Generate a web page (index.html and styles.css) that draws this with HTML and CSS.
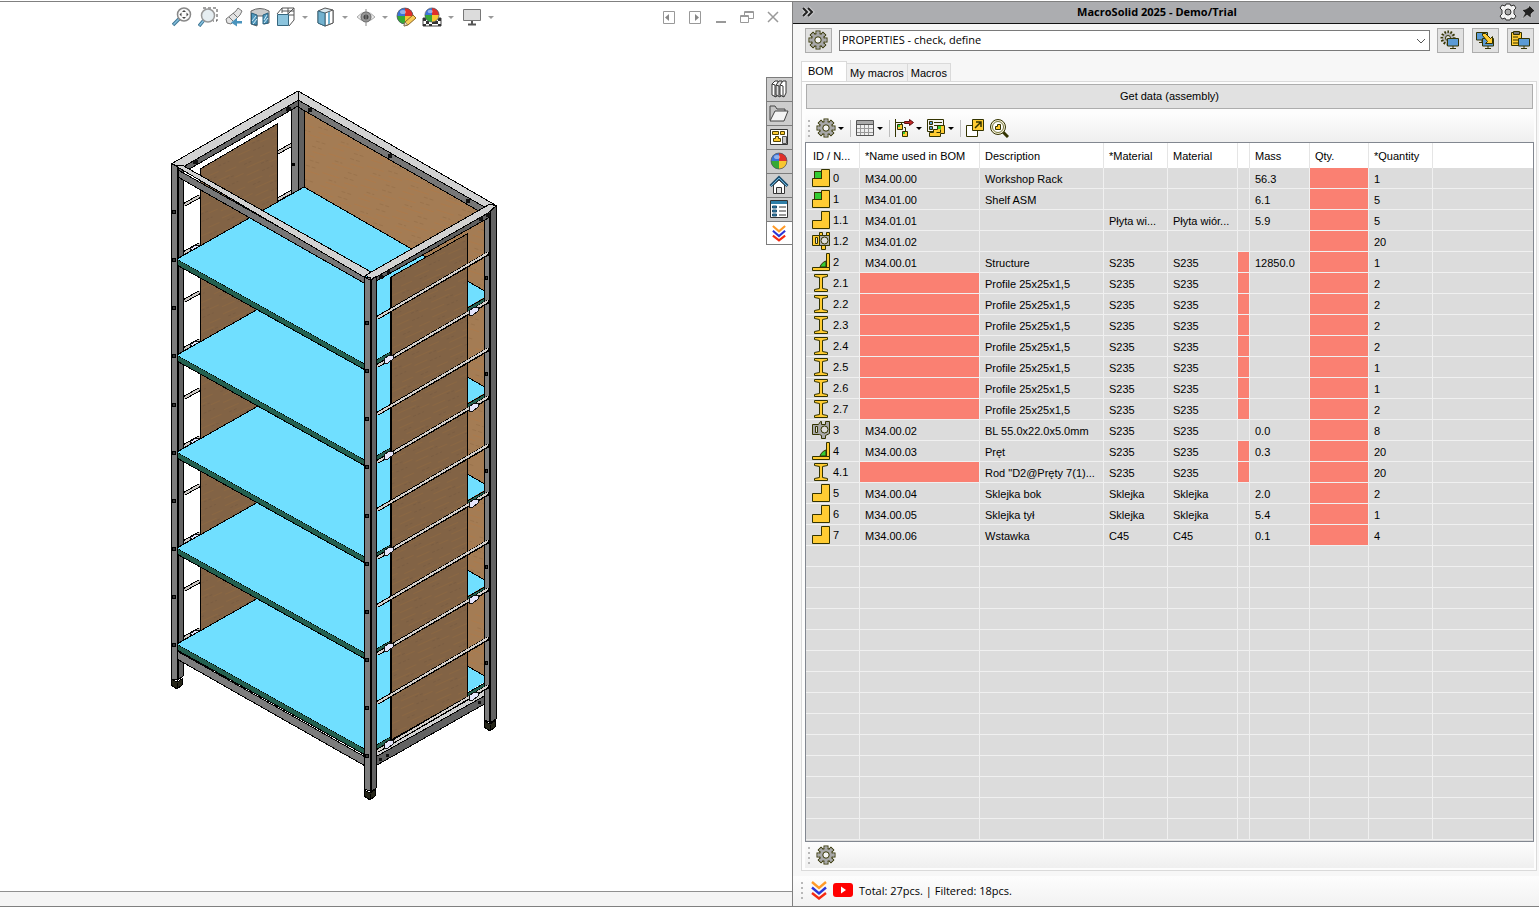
FILE: index.html
```html
<!DOCTYPE html>
<html lang="en">
    <head>
        <meta charset="UTF-8" />
        <meta name="viewport" content="width=device-width" />
        <title>MacroSolid 2025 - Demo/Trial</title>
        <link rel="stylesheet" href="styles.css">
    </head>
    <body>
        <!-- shared icons -->
        <svg class="defs" width="0" height="0">
            <symbol id="gear" viewBox="0 0 20 20">
                <g fill="#a8a8a8" stroke="#333300">
                    <rect x="8" y="1" width="4" height="18" /><rect x="1" y="8" width="18" height="4" />
                    <rect x="8" y="1" width="4" height="18" transform="rotate(45 10 10)" />
                    <rect x="8" y="1" width="4" height="18" transform="rotate(-45 10 10)" />
                    <circle cx="10" cy="10" r="6.5" />
                </g>
                <g fill="#a8a8a8">
                    <rect x="8.5" y="1.5" width="3" height="17" /><rect x="1.5" y="8.5" width="17" height="3" />
                    <rect x="8.5" y="1.5" width="3" height="17" transform="rotate(45 10 10)" />
                    <rect x="8.5" y="1.5" width="3" height="17" transform="rotate(-45 10 10)" />
                </g>
                <circle cx="10" cy="10" r="3.2" fill="#f4f4f4" stroke="#333300" />
            </symbol>
            <symbol id="screen" viewBox="0 0 12 12">
                <path d="M.5 .5h11v7.500h-11z" fill="#5b9bd5" stroke="#333300" />
                <path d="M6 8v2.500M3 10.500h6" stroke="#333300" fill="none" />
            </symbol>
            <symbol id="ball" viewBox="0 0 18 18">
                <circle cx="9" cy="9" r="8" fill="#3a73d8" />
                <path d="M9 9V1A8 8 0 0 1 17 9z" fill="#e0302a" />
                <path d="M9 9H17A8 8 0 0 1 9 17z" fill="#f7c62f" />
                <path d="M9 9V17A8 8 0 0 1 1 9z" fill="#36a936" />
                <circle cx="9" cy="9" r="8" fill="none" stroke="#555" stroke-opacity=".7" />
                <ellipse cx="7" cy="5" rx="3" ry="2" fill="#fff" opacity=".45" />
            </symbol>
            <symbol id="logo" viewBox="0 0 16 20">
                <g fill="none" stroke-width="2.400">
                    <path d="M1 2l7 6 7-6" stroke="#ff9a28" />
                    <path d="M1 7.500l7 6 7-6" stroke="#2a35d8" />
                    <path d="M1 13l7 5.500 7-5.500" stroke="#f52a12" />
                </g>
            </symbol>
            <symbol id="asm" viewBox="0 0 18 18">
                <path d="M.5 9.500h9v-9h8v17h-17z" fill="#ffcc33" stroke="#333300" />
                <rect x="2.500" y="2.500" width="7" height="7" fill="#33cc33" stroke="#333300" />
            </symbol>
            <symbol id="part" viewBox="0 0 18 18">
                <path d="M.5 9.500h9v-9h8v17h-17z" fill="#ffcc33" stroke="#333300" />
            </symbol>
            <symbol id="weld" viewBox="0 0 18 18">
                <path d="M.5 14.500h17v3h-17zM14.500 .5h3v14h-3z" fill="#ffcc33" stroke="#333300" />
                <path d="M8 14c1-3 3-5 6-6v6z" fill="#33cc33" stroke="#333300" />
            </symbol>
            <symbol id="profile" viewBox="0 0 18 18">
                <path d="M2.500 .5h13v2l-5 1v11l5 1v2h-13v-2l5-1v-11l-5-1z" fill="#ffcc33" stroke="#333300" />
            </symbol>
            <symbol id="bought" viewBox="0 0 18 18">
                <path d="M.5 3.500h7v-3h3v3h4v-3h3v13h-4v4h-4v-4h-9z" fill="#ffcc33" stroke="#333300" />
                <path d="M7.500 3.500h10v10h-10z" fill="#b0b0b0" stroke="#333300" />
                <path d="M3.500 5.500h2v6h-2z" fill="#dcdcdc" stroke="#333300" />
                <circle cx="12.500" cy="8.500" r="3.500" fill="#dcdcdc" stroke="#333300" />
            </symbol>
            <symbol id="bought-gray" viewBox="0 0 18 18">
                <path d="M.5 3.500h6l2-3h1v3h4v-3h4v12l-4 2v3h-4v-3l-2-1h-7z" fill="#a8a8a8" stroke="#333300" />
                <path d="M3.500 5.500h2v6h-2z" fill="#dcdcdc" stroke="#333300" />
                <circle cx="12.500" cy="8.500" r="3.500" fill="#dcdcdc" stroke="#333300" />
            </symbol>
        </svg>

        <div class="app">
            <main class="viewport">
                <div class="view-bar">
                    <button title="Zoom to fit"><svg viewBox="0 0 20 20"><path d="M1 18l6-6" stroke="#3d7593" stroke-width="3.500" /><path d="M1.500 17.500l5.500-5.500" stroke="#86c1e0" stroke-width="1.500" /><circle cx="12" cy="7.500" r="6.500" fill="#fafafa" stroke="#888" stroke-width="1.500" /><path d="M12 3l2 2h-4zM12 12l2-2h-4zM7.500 7.500l2-2v4zM16.500 7.500l-2-2v4z" fill="#444" /></svg></button>
                    <button title="Zoom to area"><svg viewBox="0 0 20 20"><path d="M5 1h14v13h-4" fill="none" stroke="#444" stroke-dasharray="3 2" /><path d="M1 19l5-6" stroke="#3d7593" stroke-width="3.500" /><path d="M1.500 18.500l4.500-5.500" stroke="#86c1e0" stroke-width="1.500" /><circle cx="10" cy="8.500" r="6.500" fill="#e6eef2" stroke="#999" stroke-width="1.500" /></svg></button>
                    <button title="Previous view"><svg viewBox="0 0 20 20"><path d="M2 12L12 4l2-3 4 3-2 4-9 9-4-1z" fill="#e4e4e4" stroke="#777" /><path d="M9 6l5 5M5 10l4 4" stroke="#777" /><path d="M18 14h-5v-3l-6 4.500 6 4v-3h5z" fill="#4a94bd" /></svg></button>
                    <button title="Section view"><svg viewBox="0 0 20 20"><path d="M1 4q9-5 18 0v12l-5 1V9H7v10l-6-2z" fill="#ccc" stroke="#666" /><path d="M1.500 6L7 8v10l-5.500-1zM13 8l5-2v10l-5 1z" fill="#4e96bb" stroke="#2d627e" /><path d="M2 14l4-5M3 17l4-5M14 13l3-5M14 16l4-5" stroke="#d5ecf7" /></svg></button>
                    <button title="View orientation"><svg viewBox="0 0 20 20"><path d="M1 7l5-6h12v12l-5 6M6 1v5M12 7l6-6M6 4h12M12 1v6M18 8h-5" fill="none" stroke="#555" /><path d="M1.500 7.500h11v11h-11z" fill="#8cc4dd" stroke="#36677f" /></svg></button>
                    <span class="drop"></span>
                    <button title="Display style"><svg viewBox="0 0 20 20"><path d="M2 4l7-3 8 2v13l-8 3-7-3z" fill="#dbe9ef" stroke="#555" /><path d="M9 6l8-3v13l-8 3z" fill="#fff" stroke="#555" /><path d="M2 4l7 2v13l-7-3z" fill="#73b2cf" stroke="#36677f" /><path d="M13 5v12" stroke="#73b2cf" stroke-width="2" /></svg></button>
                    <span class="drop"></span>
                    <button title="Hide/show items"><svg viewBox="0 0 20 20"><path d="M1 10q9-10 18 0q-9 9-18 0z" fill="#ededed" stroke="#aaa" /><circle cx="10" cy="10" r="5" fill="#999" stroke="#666" /><circle cx="10" cy="10" r="2.500" fill="#444" /><path d="M10 2v17" stroke="#888" /></svg></button>
                    <span class="drop"></span>
                    <button title="Edit appearance"><svg viewBox="0 0 20 20"><use href="#ball" x="0" y="0" width="18" height="18" /><path d="M8 19l1-4 8-7 3 3-8 7z" fill="#f8cb58" stroke="#8b6527" /><path d="M8 19l1-4 2.500 2.500z" fill="#f3e3ca" stroke="#555" stroke-width=".5" /></svg></button>
                    <button title="Apply scene"><svg viewBox="0 0 20 20"><path d="M1 11h18v8H1z" fill="#fff" stroke="#444" /><path d="M1 11h3v3H1zM4 14h3v3H4zM1 17h3v2H1zM16 11h3v3h-3zM13 14h3v3h-3zM16 17h3v2h-3zM7 17h3v2H7zM10 14h3v3h-3z" fill="#333" /><use href="#ball" x="2" y="0" width="16" height="16" /></svg></button>
                    <span class="drop"></span>
                    <button title="View settings"><svg viewBox="0 0 20 20"><path d="M1.500 2.500h17v11h-17z" fill="#dcdcdc" stroke="#777" /><path d="M10 14v4M6 17.500h8" stroke="#555" stroke-width="2" /></svg></button>
                    <span class="drop"></span>
                    <div class="window-buttons">
                        <button title="Previous pane"><svg viewBox="0 0 14 14"><path d="M1.500 1.500h11v12h-11z" fill="none" stroke="#999" /><path d="M3 7.500l4-3.500v7z" fill="#888" /></svg></button>
                        <button title="Next pane"><svg viewBox="0 0 14 14"><path d="M1.500 1.500h11v12h-11z" fill="none" stroke="#999" /><path d="M11 7.500L7 4v7z" fill="#888" /></svg></button>
                        <button title="Minimize"><svg viewBox="0 0 14 14"><path d="M2 12h10" stroke="#999" stroke-width="2" /></svg></button>
                        <button title="Restore"><svg viewBox="0 0 14 14"><path d="M4.500 5V1.500h9v7H9M.500 5.500h8v7h-8zM.500 6.500h8M5 2.500h8" fill="none" stroke="#999" /></svg></button>
                        <button title="Close"><svg viewBox="0 0 14 14"><path d="M2 2l10 10M12 2L2 12" stroke="#999" stroke-width="1.500" /></svg></button>
                    </div>
                </div>

                <div class="canvas">
                    <svg class="rack" viewBox="160 80 350 730" shape-rendering="crispEdges">
                        <defs>
                            <pattern id="wood-dark" width="38" height="22" patternUnits="userSpaceOnUse" patternTransform="rotate(-24)">
                                <rect width="38" height="22" fill="#826345" />
                                <path d="M0 3h16M22 6h12M5 11h20M28 15h10M2 18h14" stroke="#8a6743" fill="none" />
                                <path d="M4 7h8M20 13h9M18 20h12" stroke="#7a5d42" stroke-dasharray="3 2" fill="none" />
                            </pattern>
                            <pattern id="wood-light" width="40" height="20" patternUnits="userSpaceOnUse" patternTransform="rotate(18)">
                                <rect width="40" height="20" fill="#a47c54" />
                                <path d="M0 4h18M24 7h14M6 12h22M2 17h12" stroke="#ab7a4c" fill="none" />
                                <path d="M22 2h12M8 9h8M24 16h12" stroke="#9a734c" stroke-dasharray="4 2" fill="none" />
                            </pattern>
                            <g id="shelf">
                                <path d="M177 259L367 365V371L177 265zM367 365L490 295V301L367 371z" fill="#24604f" stroke="#000" />
                                <path d="M177 259L304 187L490 294L367 365z" fill="#70dfff" />
                                <path d="M177 259L304 187L490 294" fill="none" stroke="#000" />
                            </g>
                            <g id="rod">
                                <path d="M377 318L489 253" stroke="#000" stroke-width="4" />
                                <path d="M377 318L488 253" stroke="#d4d0cc" stroke-width="2" />
                            </g>
                            <g id="clip-rod">
                                <use href="#rod" y="48" />
                                <path d="M384 359l5-4h4v4l-5 4h-4zM469 311l5-4h4v4l-5 4h-4z" fill="#e4e4fa" stroke="#111" />
                            </g>
                            <g id="left-rod">
                                <path d="M184 205l16-9" stroke="#000" stroke-width="4" />
                                <path d="M184 205l16-9" stroke="#ccc8c4" stroke-width="2" />
                                <path d="M184 253l16-9" stroke="#000" stroke-width="4" />
                                <path d="M184 253l16-9" stroke="#ccc8c4" stroke-width="2" />
                                <path d="M190 249l5-4h5v3l-6 4z" fill="#e4e4fa" stroke="#111" />
                            </g>
                            <g id="bolts">
                                <path d="M172 210h3v3h-3zM172 258h3v3h-3zM365 321h3v3h-3zM365 369h3v3h-3zM485 276h2v3h-2z" fill="#333" stroke="#000" />
                            </g>
                            <g id="foot">
                                <path d="M0 0l6 3 5-3v6l-5 4-6-4z" fill="#26261a" stroke="#000" />
                                <path d="M6 4v6" stroke="#000" />
                            </g>
                        </defs>

                        <path d="M304 110L484 214V682L304 578z" fill="url(#wood-light)" stroke="#000" />
                        <path d="M277 153l16-9M277 200l16-9" stroke="#000" stroke-width="4" />
                        <path d="M277 153l16-9M277 200l16-9" stroke="#ccc8c4" stroke-width="2" />
                        <path d="M291 104h7v90h-7z" fill="#7d7d7d" stroke="#000" />
                        <path d="M298 100h6v92h-6z" fill="#606060" stroke="#000" />
                        <path d="M292 163h3v3h-3z" fill="#000" />
                        <use href="#left-rod" /><use href="#left-rod" y="96" /><use href="#left-rod" y="193" /><use href="#left-rod" y="289" /><use href="#left-rod" y="385" />
                        <path d="M200 169L277 124V590L200 631z" fill="url(#wood-dark)" stroke="#000" />

                        <!-- left post, shelves lie over its inner face -->
                        <use href="#foot" x="171" y="679" />
                        <path d="M178 168h5v508l-5 4z" fill="#626262" stroke="#000" />

                        <!-- bottom frame -->
                        <path d="M177 651L367 758V767L177 659z" fill="#7d7d7d" stroke="#000" />
                        <path d="M370 753L488 686V696L370 761z" fill="#d2d2d2" stroke="#000" />
                        <path d="M370 760L488 694V702L370 769z" fill="#626262" stroke="#000" />
                        <path d="M379 758h3v3h-3zM386 754h3v3h-3zM478 701h3v3h-3z" fill="#111" />

                        <use href="#shelf" y="385" /><use href="#shelf" y="289" /><use href="#shelf" y="193" /><use href="#shelf" y="96" /><use href="#shelf" />
                        <path d="M171 164h6v516l-6-1z" fill="#7d7d7d" stroke="#000" />

                        <!-- right rear post -->
                        <path d="M484 212h5v510l-5-2z" fill="#7d7d7d" stroke="#000" />
                        <path d="M490 208l6-2v513l-6 4z" fill="#626262" stroke="#000" />
                        <use href="#foot" x="484" y="721" />

                        <path d="M391 277L467 234V697L391 740z" fill="url(#wood-dark)" stroke="#000" />
                        <path d="M391 277V740" stroke="#000" stroke-width="2" />

                        <use href="#rod" /><use href="#rod" y="96" /><use href="#rod" y="192" /><use href="#rod" y="288" /><use href="#rod" y="385" />
                        <use href="#clip-rod" /><use href="#clip-rod" y="96" /><use href="#clip-rod" y="192" /><use href="#clip-rod" y="288" /><use href="#clip-rod" y="385" />

                        <!-- top frame -->
                        <path d="M183 166L298 99V106L186 171z" fill="#666" stroke="#000" />
                        <path d="M171 164L298 91L304 95V97L183 167z" fill="#d2d2d2" stroke="#000" />
                        <path d="M298 99L484 206V214L298 107z" fill="#777" stroke="#000" />
                        <path d="M298 91L497 206L488 209L298 100z" fill="#d2d2d2" stroke="#000" />
                        <path d="M308 108h4v4h-4zM388 154h4v4h-4zM466 199h4v4h-4zM286 107h5v4h-5zM193 160h5v4h-5z" fill="#111" />
                        <path d="M178 170L364 275V283L178 177z" fill="#777" stroke="#000" />
                        <path d="M174 165L182 165L371 272L364 277z" fill="#d2d2d2" stroke="#000" />
                        <path d="M371 279L490 210V217L371 284z" fill="#606060" stroke="#000" />
                        <path d="M366 275L490 204L496 206L488 213L371 280z" fill="#d2d2d2" stroke="#000" />

                        <!-- front post -->
                        <use href="#foot" x="364" y="790" />
                        <path d="M364 277h6v514l-6-2z" fill="#7d7d7d" stroke="#000" />
                        <path d="M371 280l5-3v511l-5 4z" fill="#626262" stroke="#000" />
                        <path d="M364 277l6 3 7-4" fill="none" stroke="#000" />
                        <path d="M379 275h4v4h-4zM387 270h3v4h-3zM479 217h4v4h-4zM486 213h4v4h-4z" fill="#111" />
                        <use href="#bolts" /><use href="#bolts" y="96" /><use href="#bolts" y="193" /><use href="#bolts" y="289" /><use href="#bolts" y="385" />
                    </svg>

                    <nav class="task-tabs">
                        <button title="Design library"><svg viewBox="0 0 20 20"><path d="M3 5l3-3h3v13l-2 3-4-2z" fill="#fff" stroke="#333" /><path d="M7 6l3-4h3v13l-2 3-4-2z" fill="#ddd" stroke="#333" /><path d="M11 6l3-4h3v12l-2 4-4-2z" fill="#fff" stroke="#333" /><path d="M3 5l3 1v12M7 6l3 1v10M11 6l3 1v11" fill="none" stroke="#333" /></svg></button>
                        <button title="File explorer"><svg viewBox="0 0 20 20"><path d="M1 17V3h5l2 3h8v3" fill="#c4c4c4" stroke="#444" /><path d="M1 18L6 8h13l-4 10z" fill="#f4f4f4" stroke="#444" /></svg></button>
                        <button title="View palette"><svg viewBox="0 0 20 20"><path d="M1.500 2.500h17v15h-17z" fill="#fff" stroke="#333" /><path d="M3.500 4.500h6v3h-6zM11.500 4.500h4v3h-4zM4.500 14.500v-3h2v-2h3v2h2v3z" fill="#ffcc33" stroke="#554400" /><path d="M13.500 9.500h4v7h-4z" fill="#ccc" stroke="#555" /></svg></button>
                        <button title="Appearances"><svg viewBox="0 0 20 20"><use href="#ball" x="1" y="1" width="18" height="18" /></svg></button>
                        <button title="Custom properties"><svg viewBox="0 0 20 20"><path d="M4.500 10v8.500h11V10L10 5z" fill="#fff" stroke="#333" /><path d="M1.500 11L10 2.500 18.500 11" fill="none" stroke="#1d4f70" stroke-width="3" /><path d="M2 11l8-8 8 8" fill="none" stroke="#6fb6dc" /><path d="M7.500 12.500h5v6h-5z" fill="#ddd" stroke="#333" /></svg></button>
                        <button title="Forum"><svg viewBox="0 0 20 20"><path d="M1.500 1.500h17v17h-17z" fill="#fff" stroke="#333" /><path d="M2 2h16v3H2z" fill="#2f7fa8" /><path d="M3.500 7h4v2h-4zM3.500 11h4v2h-4zM3.500 15h4v2h-4z" fill="#2f7fa8" stroke="#1d4f70" /><path d="M10 8h7M10 12h7M10 16h7" stroke="#333" /></svg></button>
                        <button class="current" title="MacroSolid"><svg viewBox="0 0 20 20"><use href="#logo" x="3" y="1" width="14" height="18" /></svg></button>
                    </nav>
                </div>
                <div class="view-status"></div>
            </main>

            <aside class="panel">
                <header class="title-bar">
                    <button title="Collapse"><svg width="14" height="12" viewBox="0 0 14 12"><path d="M2 2l4 4-4 4M7 2l4 4-4 4" fill="none" stroke="#fff" stroke-width="4" opacity=".4" /><path d="M2 2l4 4-4 4M7 2l4 4-4 4" fill="none" stroke="#222" stroke-width="2" /></svg></button>
                    <h1>MacroSolid 2025 - Demo/Trial</h1>
                    <button title="Options"><svg width="18" height="18" viewBox="0 0 18 18"><path d="M7 1h4l1 2 3-1 2 3-2 2v4l2 2-2 3-3-1-1 2H7l-1-2-3 1-2-3 2-2V7L1 5l2-3 3 1z" fill="#f2f2f2" stroke="#333" /><circle cx="9" cy="9" r="3" fill="#aaa" stroke="#333" /></svg></button>
                    <button title="Pin"><svg width="16" height="16" viewBox="0 0 16 16"><path d="M9 1l6 6-2 1-2 2v4l-4-3-5 4 3-6-3-3 4-1 3-2z" fill="#222" stroke="#ddd" stroke-opacity=".5" /></svg></button>
                </header>

                <div class="macro-row">
                    <button class="tool" title="Settings"><svg width="20" height="20"><use href="#gear" width="20" height="20" /></svg></button>
                    <div class="combo">
                        <select aria-label="Macro">
                            <option>PROPERTIES - check, define</option>
                        </select>
                        <svg width="10" height="6" viewBox="0 0 10 6"><path d="M1 1l4 4 4-4" fill="none" stroke="#555" /></svg>
                    </div>
                    <div class="tools">
                        <button class="tool" title="Configure"><svg width="20" height="20" viewBox="0 0 20 20"><circle cx="8" cy="8" r="6" fill="#b4b4b4" stroke="#333300" stroke-width="3" stroke-dasharray="1.500 1.500" /><circle cx="8" cy="8" r="5" fill="#b4b4b4" /><circle cx="8" cy="8" r="2.500" fill="#e1e1e1" stroke="#333300" /><use href="#screen" x="7" y="8" width="12" height="12" /></svg></button>
                        <button class="tool" title="Copy"><svg width="20" height="20" viewBox="0 0 20 20"><use href="#screen" x="1" y="2" width="12" height="12" /><use href="#screen" x="7" y="8" width="12" height="12" /><path d="M7.500 3.500h3l5 5 2-2v7h-7l2-2-5-6z" fill="#ffcc33" stroke="#333300" /></svg></button>
                        <button class="tool" title="Paste"><svg width="20" height="20" viewBox="0 0 20 20"><path d="M1.500 2.500h10v13h-10z" fill="#ffcc33" stroke="#333300" /><path d="M3.500 1.500h6v3h-6z" fill="#777" stroke="#333300" /><path d="M3 7h5M3 10h5M3 13h5" stroke="#333300" /><use href="#screen" x="8" y="8" width="12" height="12" /></svg></button>
                    </div>
                </div>

                <div class="tabs">
                    <button class="tab active">BOM</button>
                    <button class="tab">My macros</button>
                    <button class="tab">Macros</button>
                </div>

                <section class="page">
                    <button class="get-data">Get data (assembly)</button>

                    <div class="tool-strip">
                        <span class="grip"></span>
                        <button class="menu" title="Settings"><svg width="20" height="20"><use href="#gear" width="20" height="20" /></svg></button>
                        <span class="sep"></span>
                        <button class="menu" title="Columns"><svg width="20" height="20" viewBox="0 0 20 20"><path d="M1.500 2.500h17v15h-17z" fill="#eee" stroke="#555" /><path d="M2 3h16v3H2z" fill="#aaa" /><path d="M1 6.500h18" stroke="#555" /><path d="M2 10.500h16M2 14.500h16M5.500 7v10M9.500 7v10M13.500 7v10" stroke="#999" /></svg></button>
                        <span class="sep"></span>
                        <button class="menu" title="Export"><svg width="20" height="20" viewBox="0 0 20 20"><path d="M1.500 1v18M2 4.500h8M7.500 5v2M10 9.500h1.500v4" fill="none" stroke="#333300" /><path d="M3.500 6.500h5v5h-5zM8.500 13.500h5v5h-5z" fill="#ffcc33" stroke="#333300" /><path d="M4 7h2v2H4zM9 14h2v2H9z" fill="#33cc33" /><path d="M10.500 3.500h5v-2l4 3-4 3v-2h-5z" fill="#c62828" stroke="#5c1010" /></svg></button>
                        <button class="menu" title="Documents"><svg width="20" height="20" viewBox="0 0 20 20"><path d="M1.500 1.500h16v12h-16z" fill="#f4f4f4" stroke="#333300" /><path d="M3.500 3.500h3v3h-3zM3.500 8.500h3v3h-3z" fill="#5b9bd5" stroke="#333300" /><path d="M8 4.500h8M8 7.500h5" stroke="#333300" /><path d="M3.500 18.500v-4h4v-3h4v-4h7v8h-4v3z" fill="#ffcc33" stroke="#333300" /><path d="M10.500 14.500h4v-3" fill="none" stroke="#333300" /><path d="M12 8h3v3h-3z" fill="#33cc33" /></svg></button>
                        <span class="sep"></span>
                        <button title="Open"><svg width="20" height="20" viewBox="0 0 20 20"><path d="M1.500 7.500h11v11h-11z" fill="#fff" stroke="#333300" /><path d="M7.500 1.500h11v11h-11z" fill="#ffcc33" stroke="#333300" /><path d="M10 10l6-6M11 4h5v5" fill="none" stroke="#333300" stroke-width="1.500" /></svg></button>
                        <button title="Find"><svg width="20" height="20" viewBox="0 0 20 20"><path d="M14 14l5 5" stroke="#333300" stroke-width="3" /><circle cx="9" cy="9" r="7.500" fill="#f4f0d8" stroke="#333300" /><circle cx="9" cy="9" r="5.500" fill="#fff" stroke="#77773c" /><path d="M6.500 11.500v-3h2v-2h3v5z" fill="#ffcc33" stroke="#333300" /></svg></button>
                    </div>

                    <div class="grid">
                        <table>
                            <colgroup>
                                <col class="c-id"><col class="c-name"><col class="c-desc"><col class="c-mat1"><col class="c-mat2">
                                <col class="c-flag"><col class="c-mass"><col class="c-qty"><col class="c-quantity"><col>
                            </colgroup>
                            <thead>
                                <tr>
                                    <th>ID / N...</th><th>*Name used in BOM</th><th>Description</th><th>*Material</th><th>Material</th>
                                    <th></th><th>Mass</th><th>Qty.</th><th>*Quantity</th><th></th>
                                </tr>
                            </thead>
                            <tbody id="rows"></tbody>
                        </table>
                    </div>

                    <div class="tool-strip bottom">
                        <span class="grip"></span>
                        <button title="Settings"><svg width="20" height="20"><use href="#gear" width="20" height="20" /></svg></button>
                    </div>
                </section>

                <footer class="status">
                    <span class="grip"></span>
                    <svg width="16" height="20"><use href="#logo" width="16" height="20" /></svg>
                    <svg width="20" height="14" viewBox="0 0 20 14"><rect width="20" height="14" rx="3" fill="#f00" /><path d="M8 3.500v7l5-3.500z" fill="#fff" /></svg>
                    <span>Total: 27pcs. | Filtered: 18pcs.</span>
                </footer>
            </aside>
        </div>
        <script src="bom.js"></script>
    </body>
</html>
```
FILE: bom.js
```js
// icon, id, name, description, *material, material, flag, mass, quantity
var items = [
    ["asm", "0", "M34.00.00", "Workshop Rack", "", "", 0, "56.3", "1"],
    ["asm", "1", "M34.01.00", "Shelf ASM", "", "", 0, "6.1", "5"],
    ["part", "1.1", "M34.01.01", "", "Płyta wi...", "Płyta wiór...", 0, "5.9", "5"],
    ["bought", "1.2", "M34.01.02", "", "", "", 0, "", "20"],
    ["weld", "2", "M34.00.01", "Structure", "S235", "S235", 1, "12850.0", "1"],
    ["profile", "2.1", null, "Profile 25x25x1,5", "S235", "S235", 1, "", "2"],
    ["profile", "2.2", null, "Profile 25x25x1,5", "S235", "S235", 1, "", "2"],
    ["profile", "2.3", null, "Profile 25x25x1,5", "S235", "S235", 1, "", "2"],
    ["profile", "2.4", null, "Profile 25x25x1,5", "S235", "S235", 1, "", "2"],
    ["profile", "2.5", null, "Profile 25x25x1,5", "S235", "S235", 1, "", "1"],
    ["profile", "2.6", null, "Profile 25x25x1,5", "S235", "S235", 1, "", "1"],
    ["profile", "2.7", null, "Profile 25x25x1,5", "S235", "S235", 1, "", "2"],
    ["bought-gray", "3", "M34.00.02", "BL 55.0x22.0x5.0mm", "S235", "S235", 0, "0.0", "8"],
    ["weld", "4", "M34.00.03", "Pręt", "S235", "S235", 1, "0.3", "20"],
    ["profile", "4.1", null, "Rod \"D2@Pręty 7(1)...", "S235", "S235", 1, "", "20"],
    ["part", "5", "M34.00.04", "Sklejka bok", "Sklejka", "Sklejka", 0, "2.0", "2"],
    ["part", "6", "M34.00.05", "Sklejka tył", "Sklejka", "Sklejka", 0, "5.4", "1"],
    ["part", "7", "M34.00.06", "Wstawka", "C45", "C45", 0, "0.1", "4"]
];
var emptyRows = 14;

function cell(text, missing) {
    return "<td" + (missing ? " class=\"missing\"" : "") + ">" + (text || "") + "</td>";
}

function row(item) {
    var icon = "<svg width=\"18\" height=\"18\"><use href=\"#" + item[0] + "\" width=\"18\" height=\"18\" /></svg>";
    return "<tr><td class=\"id\"><div>" + icon + item[1] + "</div></td>" +
        cell(item[2], item[2] === null) + cell(item[3]) + cell(item[4]) + cell(item[5]) +
        cell("", item[6]) + cell(item[7]) + cell("", true) + cell(item[8]) + cell("") + "</tr>";
}

var html = items.map(row).join("");
for (var i = 0; i < emptyRows; i++)
    html += "<tr>" + "<td></td>".repeat(10) + "</tr>";
document.getElementById("rows").innerHTML = html;
```
FILE: styles.css
```css
* {
    box-sizing: border-box;
}

body {
    margin: 0;
    font-family: "Liberation Sans", Arial, sans-serif;
    font-size: 11px;
    color: #000;
    background-color: #fff;
}

button {
    display: flex;
    align-items: center;
    justify-content: center;
    margin: 0;
    padding: 0;
    border: 0;
    background: none;
    font: inherit;
    color: inherit;
}

svg {
    display: block;
    flex: none;
}

.defs {
    position: absolute;
}

.app {
    display: grid;
    grid-template-columns: 792fr 747fr;
    min-height: 100vh;
    padding-top: 1px;
}

/* graphics area */
.viewport {
    display: flex;
    flex-direction: column;
    min-width: 0;
    border-top: 1px solid #808080;
    border-bottom: 1px solid #fff;
}

.view-bar {
    display: flex;
    align-items: center;
    gap: 6px;
    height: 30px;
    padding: 0 12px 0 172px;
}

.view-bar > button svg {
    width: 20px;
    height: 20px;
}

.drop {
    width: 8px;
}

.drop::before {
    content: "";
    display: block;
    width: 0;
    border: 3px solid transparent;
    border-top-color: #999;
    border-bottom: 0;
}

.window-buttons {
    display: flex;
    gap: 12px;
    margin-left: auto;
}

.window-buttons svg {
    width: 14px;
    height: 14px;
}

.canvas {
    display: flex;
    flex: 1;
    justify-content: space-between;
    padding-top: 45px;
}

.rack {
    width: 350px;
    height: 730px;
    margin: 3px 0 0 160px;
}

.task-tabs {
    width: 26px;
}

.task-tabs button {
    width: 26px;
    height: 24px;
    padding: 0 1px 1px 0;
    border: 1px solid #7c7c7c;
    border-width: 1px 0 0 1px;
    background-color: #cdcdcd;
}

.task-tabs svg {
    width: 20px;
    height: 20px;
}

.task-tabs .current {
    border-bottom-width: 1px;
    background-color: #fff;
}

.view-status {
    height: 16px;
    border-top: 1px solid #909090;
    border-bottom: 1px solid #808080;
    background-color: #f5f5f5;
}

/* docked panel */
.panel {
    display: flex;
    flex-direction: column;
    min-width: 0;
    margin-bottom: 1px;
    border-top: 1px solid #808080;
    border-bottom: 1px solid #808080;
    border-left: 1px solid #808080;
    background-color: #f7f7f7;
}

.title-bar {
    display: flex;
    align-items: center;
    gap: 3px;
    height: 22px;
    padding: 0 3px 2px 8px;
    border-bottom: 1px solid #111;
    background-color: #acadb0;
}

.title-bar h1 {
    flex: 1;
    margin: 0;
    font-family: "Open Sans", sans-serif;
    font-size: 11px;
    font-weight: bold;
    text-align: center;
}

.macro-row {
    display: flex;
    align-items: center;
    gap: 7px;
    padding: 4px 5px 0 12px;
}

.tools {
    display: flex;
    gap: 8px;
}

.tool {
    width: 27px;
    height: 25px;
    padding: 0 1px 1px 0;
    border: 1px solid #adadad;
    background-color: #e1e1e1;
}

.combo {
    position: relative;
    flex: 1;
}

.combo select {
    display: block;
    width: 100%;
    height: 21px;
    padding: 0 20px 2px 2px;
    border: 1px solid #7a7a7a;
    border-radius: 0;
    background-color: #fff;
    color: #000;
    font-family: "Open Sans", sans-serif;
    font-size: 11px;
    appearance: none;
}

.combo svg {
    position: absolute;
    right: 4px;
    top: 8px;
    pointer-events: none;
}

.tabs {
    display: flex;
    align-items: flex-end;
    margin: 8px 0 0 8px;
}

.tab {
    height: 18px;
    padding: 0 3px;
    border: 1px solid #dadada;
    border-width: 1px 1px 0 0;
    background-color: #f0f0f0;
}

.tab.active {
    height: 21px;
    padding: 0 13px 2px 6px;
    border-left-width: 1px;
    margin-bottom: -1px;
    background-color: #fff;
}

.page {
    display: flex;
    flex: 1;
    flex-direction: column;
    margin: 0 2px 0 8px;
    padding: 2px 2px 2px 3px;
    border: 1px solid #dadada;
    background-color: #fdfdfd;
}

.get-data {
    height: 25px;
    margin: 0 1px 5px;
    padding-bottom: 2px;
    border: 1px solid #adadad;
    background-color: #e1e1e1;
}

.tool-strip {
    display: flex;
    align-items: center;
    gap: 4px;
    height: 28px;
    padding-left: 3px;
    background: linear-gradient(#fdfdfd, #efefef);
}

.tool-strip.bottom {
    height: 26px;
}

.grip {
    width: 2px;
    height: 17px;
    margin-right: 2px;
    background: repeating-linear-gradient(#b8b8b8 0 2px, transparent 2px 5px);
}

.sep {
    width: 1px;
    height: 17px;
    margin: 0 0 0 2px;
    background-color: #bdbdbd;
}

.menu {
    gap: 2px;
}

.menu::after {
    content: "";
    border: 3px solid transparent;
    border-top-color: #000;
    border-bottom: 0;
}

.grid {
    flex: 1;
    border: 1px solid #828790;
    background-color: #dcdcdc;
}

table {
    width: 100%;
    table-layout: fixed;
    border-collapse: separate;
    border-spacing: 0;
}

.c-id { width: 54px; }
.c-name { width: 120px; }
.c-desc { width: 124px; }
.c-mat1 { width: 64px; }
.c-mat2 { width: 70px; }
.c-flag { width: 12px; }
.c-mass { width: 60px; }
.c-qty { width: 59px; }
.c-quantity { width: 64px; }

th, td {
    padding: 0 0 0 5px;
    font-weight: normal;
    text-align: left;
    white-space: nowrap;
    border-right: 1px solid #f0f0f0;
}

th:last-child, td:last-child {
    border-right: 0;
}

th {
    height: 25px;
    background-color: #fff;
    border-right-color: #e5e5e5;
}

th:first-child {
    padding-left: 7px;
}

td {
    height: 21px;
    padding-top: 1px;
    border-bottom: 1px solid #f0f0f0;
}

.id {
    padding-top: 0;
    padding-left: 6px;
}

.id div {
    display: flex;
    align-items: center;
    gap: 3px;
}

.missing {
    background-color: #fa8072;
}

.status {
    display: flex;
    align-items: center;
    gap: 6px;
    height: 30px;
    margin-top: 5px;
    padding: 0 0 2px 8px;
    font-family: "Open Sans", sans-serif;
    background: linear-gradient(#fdfdfd, #f2f2f2);
}
```
